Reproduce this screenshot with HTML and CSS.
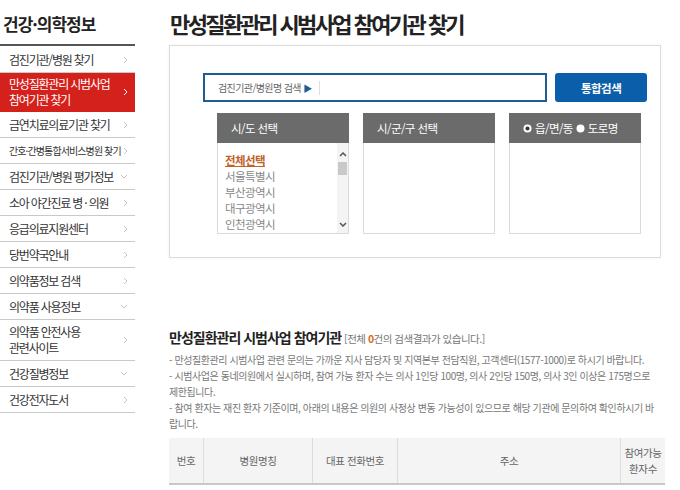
FILE: index.html
```html
<!DOCTYPE html>
<html lang="ko">
<head>
  <meta charset="UTF-8" />
  <title>만성질환관리 시범사업 참여기관 찾기</title>
  <link rel="stylesheet" href="styles.css">
</head>
<body>
  <div class="page">

    <!-- 좌측 메뉴 -->
    <div class="side">
      <h2 class="side-title">건강·의학정보</h2>
      <ul class="side-menu">
        <li><span>검진기관/병원 찾기</span><svg class="arr" width="5" height="8"><polyline points="1,1 4,4 1,7"/></svg></li>
        <li class="on two"><span>만성질환관리 시범사업<br>참여기관 찾기</span><svg class="arr" width="5" height="8"><polyline points="1,1 4,4 1,7"/></svg></li>
        <li><span>금연치료의료기관 찾기</span><svg class="arr" width="5" height="8"><polyline points="1,1 4,4 1,7"/></svg></li>
        <li class="small"><span>간호·간병통합서비스병원 찾기</span><svg class="arr" width="5" height="8"><polyline points="1,1 4,4 1,7"/></svg></li>
        <li><span>검진기관/병원 평가정보</span><svg class="arr" width="8" height="5"><polyline points="1,1 4,4 7,1"/></svg></li>
        <li><span>소아 야간진료 병 · 의원</span><svg class="arr" width="5" height="8"><polyline points="1,1 4,4 1,7"/></svg></li>
        <li><span>응급의료지원센터</span><svg class="arr" width="5" height="8"><polyline points="1,1 4,4 1,7"/></svg></li>
        <li><span>당번약국안내</span><svg class="arr" width="5" height="8"><polyline points="1,1 4,4 1,7"/></svg></li>
        <li><span>의약품정보 검색</span><svg class="arr" width="5" height="8"><polyline points="1,1 4,4 1,7"/></svg></li>
        <li><span>의약품 사용정보</span><svg class="arr" width="8" height="5"><polyline points="1,1 4,4 7,1"/></svg></li>
        <li class="two"><span>의약품 안전사용<br>관련사이트</span><svg class="arr" width="5" height="8"><polyline points="1,1 4,4 1,7"/></svg></li>
        <li><span>건강질병정보</span><svg class="arr" width="8" height="5"><polyline points="1,1 4,4 7,1"/></svg></li>
        <li><span>건강전자도서</span><svg class="arr" width="5" height="8"><polyline points="1,1 4,4 1,7"/></svg></li>
      </ul>
    </div>

    <!-- 본문 -->
    <div class="main">
      <h1>만성질환관리 시범사업 참여기관 찾기</h1>

      <div class="search-box">
        <div class="search-row">
          <div class="search-input">
            <span class="search-label">검진기관/병원명 검색 <b>▶</b></span>
            <span class="divider"></span>
          </div>
          <button class="search-btn">통합검색</button>
        </div>

        <div class="selects">
          <div class="sel">
            <div class="sel-head">시/도 선택</div>
            <div class="sel-body">
              <ul class="sel-list">
                <li class="all">전체선택</li>
                <li>서울특별시</li>
                <li>부산광역시</li>
                <li>대구광역시</li>
                <li>인천광역시</li>
              </ul>
              <div class="scroll">
                <svg width="8" height="5"><polyline points="1,4 4,1 7,4"/></svg>
                <div class="thumb"></div>
                <svg class="down" width="8" height="5"><polyline points="1,1 4,4 7,1"/></svg>
              </div>
            </div>
          </div>
          <div class="sel">
            <div class="sel-head">시/군/구 선택</div>
            <div class="sel-body"></div>
          </div>
          <div class="sel">
            <div class="sel-head">
              <svg width="9" height="9"><circle cx="4.5" cy="4.5" r="4" fill="#fff"/><circle cx="4.5" cy="4.5" r="2" fill="#333"/></svg>
              읍/면/동
              <svg width="9" height="9"><circle cx="4.5" cy="4.5" r="4" fill="#fff"/></svg>
              도로명
            </div>
            <div class="sel-body"></div>
          </div>
        </div>
      </div>

      <h3 class="result-title">만성질환관리 시범사업 참여기관 <span>[전체 <em>0</em>건의 검색결과가 있습니다.]</span></h3>
      <ul class="notes">
        <li>- 만성질환관리 시범사업 관련 문의는 가까운 지사 담당자 및 지역본부 전담직원, 고객센터(1577-1000)로 하시기 바랍니다.</li>
        <li>- 시범사업은 동네의원에서 실시하며, 참여 가능 환자 수는 의사 1인당 100명, 의사 2인당 150명, 의사 3인 이상은 175명으로 제한됩니다.</li>
        <li>- 참여 환자는 재진 환자 기준이며, 아래의 내용은 의원의 사정상 변동 가능성이 있으므로 해당 기관에 문의하여 확인하시기 바랍니다.</li>
      </ul>

      <table class="result-table">
        <thead>
          <tr>
            <th class="c1">번호</th>
            <th class="c2">병원명칭</th>
            <th class="c3">대표 전화번호</th>
            <th class="c4">주소</th>
            <th class="c5">참여가능<br>환자수</th>
          </tr>
        </thead>
      </table>
    </div>

  </div>
</body>
</html>
```

FILE: styles.css
```css
body {
  margin: 0;
  font-family: "Noto Sans CJK KR", "Noto Sans", sans-serif;
  color: #333;
  background: #fff;
}

ul {
  list-style: none;
  margin: 0;
  padding: 0;
}

.page {
  display: flex;
}

/* 좌측 메뉴 */
.side {
  width: 135px;
  flex-shrink: 0;
}

.side-title {
  margin: 0;
  padding: 13px 0 10px 3px;
  font-size: 17px;
  line-height: 21px;
  letter-spacing: -1px;
  color: #222;
  border-bottom: 2px solid #555;
}

.side-menu li {
  display: flex;
  align-items: center;
  justify-content: space-between;
  padding: 5px 7px 5px 9px;
  font-size: 12px;
  line-height: 15px;
  letter-spacing: -1.2px;
  color: #333;
  white-space: nowrap;
  border-bottom: 1px solid #c9c9c9;
}

.side-menu li:first-child {
  padding-top: 6px;
}

.side-menu li.small {
  font-size: 10px;
  letter-spacing: -0.9px;
}

.side-menu li.two {
  line-height: 16px;
  padding-top: 4px;
  padding-bottom: 4px;
}

.side-menu li.on {
  background: #d5211b;
  color: #fff;
  padding-top: 3px;
  padding-bottom: 3px;
  border-bottom-color: #d5211b;
}

.arr {
  flex-shrink: 0;
}

.arr polyline {
  fill: none;
  stroke: #c4c4c4;
  stroke-width: 1;
}

.on .arr polyline {
  stroke: #fff;
}

/* 본문 */
.main {
  width: 492px;
  margin-left: 34px;
}

h1 {
  margin: 0 0 9px;
  padding: 10px 0 0 1px;
  font-size: 22px;
  line-height: 26px;
  letter-spacing: -2.6px;
  color: #222;
}

.search-box {
  border: 1px solid #dcdcdc;
  box-shadow: 0 0 3px rgba(0, 0, 0, 0.06);
  padding: 27px 13px 23px 33px;
}

.search-row {
  display: flex;
  gap: 8px;
}

.search-input {
  width: 345px;
  height: 29px;
  box-sizing: border-box;
  border: 2px solid #1e5d92;
  display: flex;
  align-items: center;
  padding-left: 13px;
}

.search-label {
  font-size: 10px;
  color: #666;
  letter-spacing: -0.6px;
}

.search-label b {
  color: #1e5d92;
  font-size: 9px;
}

.divider {
  width: 1px;
  height: 14px;
  background: #ddd;
  margin-left: 7px;
}

.search-btn {
  width: 92px;
  height: 29px;
  border: none;
  border-radius: 3px;
  background: #0b5ea9;
  color: #fff;
  font-family: inherit;
  font-size: 11.5px;
  font-weight: bold;
  letter-spacing: -0.5px;
}

.selects {
  display: flex;
  gap: 14px;
  margin: 11px 0 0 14px;
}

.sel {
  width: 132px;
}

.sel-head {
  height: 30px;
  background: #6b6b6b;
  color: #fff;
  font-size: 11.5px;
  letter-spacing: -0.6px;
  display: flex;
  align-items: center;
  gap: 3px;
  padding-left: 14px;
}

.sel-body {
  height: 90px;
  border: 1px solid #dadada;
  border-top: none;
  display: flex;
}

.sel-list {
  flex: 1;
  padding: 9px 0 0 7px;
  font-size: 11.5px;
  line-height: 16px;
  letter-spacing: -0.6px;
  color: #888;
}

.sel-list .all {
  color: #c0622a;
  font-weight: bold;
  text-decoration: underline;
}

.scroll {
  width: 11px;
  background: #f4f4f4;
  display: flex;
  flex-direction: column;
  align-items: center;
  padding: 9px 0 6px;
}

.scroll polyline {
  fill: none;
  stroke: #555;
  stroke-width: 1.5;
}

.thumb {
  width: 9px;
  height: 13px;
  background: #c9c9c9;
  margin-top: 5px;
}

.scroll .down {
  margin-top: auto;
}

.result-title {
  margin: 69px 0 3px;
  font-size: 14px;
  line-height: 20px;
  letter-spacing: -1px;
  color: #222;
}

.result-title span {
  font-size: 10.5px;
  font-weight: normal;
  color: #777;
  letter-spacing: -0.5px;
}

.result-title em {
  font-style: normal;
  font-weight: bold;
  color: #d96a1e;
}

.notes {
  font-size: 10px;
  line-height: 16px;
  letter-spacing: -0.42px;
  color: #777;
}

.result-table {
  width: 492px;
  margin-top: 6px;
  border-collapse: collapse;
  table-layout: fixed;
}

.result-table th {
  height: 45px;
  padding: 0;
  background: #f4f4f4;
  border-left: 1px solid #dcdcdc;
  border-bottom: 2px solid #c8c8c8;
  font-size: 10.5px;
  font-weight: normal;
  line-height: 16px;
  letter-spacing: -0.4px;
  color: #666;
}

.result-table th:first-child {
  border-left: none;
}

.c1 { width: 34px; }
.c2 { width: 108px; }
.c3 { width: 84px; }
.c4 { width: 222px; }
.c5 { width: 44px; }
```
